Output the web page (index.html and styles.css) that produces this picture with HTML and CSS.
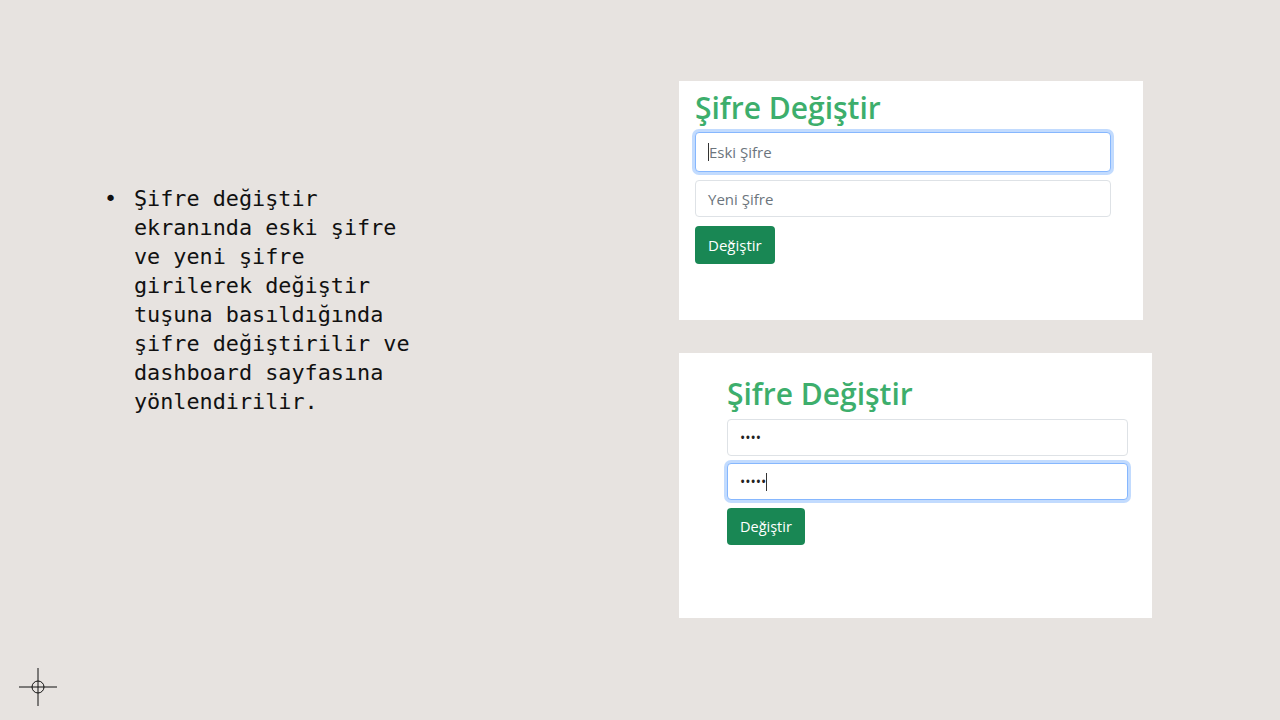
FILE: index.html
```html
<!DOCTYPE html>
<html lang="tr">
<head>
<meta charset="utf-8">
<title>Şifre Değiştir</title>
<link rel="stylesheet" href="styles.css">
</head>
<body>
<div class="slide">
  <div class="left">
    <ul class="bullets">
      <li>Şifre değiştir ekranında eski şifre ve yeni şifre girilerek değiştir tuşuna basıldığında şifre değiştirilir ve dashboard sayfasına yönlendirilir.</li>
    </ul>
  </div>
  <div class="right">
    <div class="panel panel-one">
      <h2 class="title">Şifre Değiştir</h2>
      <div class="field focused"><span class="caret"></span><span class="placeholder">Eski Şifre</span></div>
      <div class="field"><span class="placeholder">Yeni Şifre</span></div>
      <button class="btn">Değiştir</button>
    </div>
    <div class="panel panel-two">
      <h2 class="title">Şifre Değiştir</h2>
      <div class="field"><span class="dots">••••</span></div>
      <div class="field focused"><span class="dots">•••••</span><span class="caret"></span></div>
      <button class="btn btn-small">Değiştir</button>
    </div>
  </div>
  <div class="crosshair">
    <svg width="40" height="40" viewBox="0 0 40 40">
      <line x1="1" y1="20" x2="39" y2="20" stroke="#111" stroke-width="1"/>
      <line x1="20" y1="1" x2="20" y2="39" stroke="#111" stroke-width="1"/>
      <circle cx="20" cy="20" r="6" fill="none" stroke="#111" stroke-width="1"/>
    </svg>
  </div>
</div>
</body>
</html>
```
FILE: styles.css
```css
* { box-sizing: border-box; }
html, body { margin: 0; padding: 0; }
body { background: #e7e3e0; }
.slide {
  position: relative;
  width: 1280px;
  height: 720px;
  display: flex;
  background: #e7e3e0;
}
.left {
  width: 679px;
  padding-top: 184px;
  padding-left: 104px;
}
.bullets {
  margin: 0;
  padding: 0;
  list-style: none;
  width: 320px;
  font-family: "DejaVu Sans Mono", "Liberation Mono", monospace;
  font-size: 21.8px;
  line-height: 29px;
  color: #111;
}
.bullets li {
  position: relative;
  padding-left: 30px;
}
.bullets li::before {
  content: "•";
  position: absolute;
  left: 0;
  top: 0;
}
.right {
  padding-top: 81px;
  display: flex;
  flex-direction: column;
  gap: 33px;
}
.panel {
  background: #fff;
  font-family: "Open Sans", "Noto Sans", sans-serif;
}
.panel-one {
  width: 464px;
  height: 239px;
  padding: 8px 32px 0 16px;
}
.panel-two {
  width: 473px;
  height: 265px;
  padding: 22px 24px 0 48px;
}
.title {
  margin: 0 0 5px 0;
  font-weight: 600;
  font-size: 30px;
  line-height: 38px;
  color: #3dae6c;
  letter-spacing: 0;
}
.panel-two .title { margin-bottom: 6px; }
.field {
  height: 37px;
  border: 1px solid #dee2e6;
  border-radius: 4px;
  display: flex;
  align-items: center;
  padding-left: 12px;
  margin-bottom: 9px;
  background: #fff;
}
.panel-two .field { width: 401px; margin-bottom: 7px; }
.field.focused {
  border-color: #86b7fe;
  box-shadow: 0 0 0 3px rgba(13, 110, 253, 0.25);
}
.panel-one .field.focused { height: 40px; margin-bottom: 8px; }
.placeholder {
  font-size: 15px;
  color: #6c757d;
}
.caret {
  display: inline-block;
  width: 1px;
  height: 18px;
  background: #333;
}
.dots {
  font-size: 14px;
  color: #222;
}
.btn {
  display: block;
  margin-top: 0;
  height: 38px;
  padding: 0 13px;
  border: none;
  border-radius: 4px;
  background: #198754;
  color: #fff;
  font-family: "Open Sans", "Noto Sans", sans-serif;
  font-size: 15px;
}
.btn-small {
  margin-top: 8px;
  height: 37px;
  padding: 0 13px;
  font-size: 14.5px;
}
.crosshair {
  position: absolute;
  left: 18px;
  top: 667px;
  width: 40px;
  height: 40px;
}
.crosshair svg { display: block; }
```
